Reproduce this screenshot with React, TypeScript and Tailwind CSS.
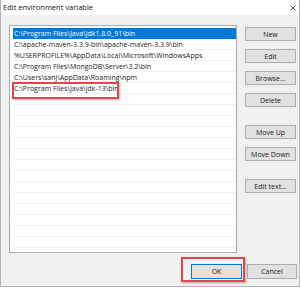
import React from "react";

const rows = [
  "C:\\Program Files\\Java\\jdk1.8.0_91\\bin",
  "C:\\apache-maven-3.3.9-bin\\apache-maven-3.3.9\\bin",
  "%USERPROFILE%\\AppData\\Local\\Microsoft\\WindowsApps",
  "C:\\Program Files\\MongoDB\\Server\\3.2\\bin",
  "C:\\Users\\sanj\\AppData\\Roaming\\npm",
  "C:\\Program Files\\Java\\jdk-13\\bin",
];

function Btn({ label, className = "" }: { label: string; className?: string }) {
  return (
    <div
      className={`h-[14px] w-[51px] bg-[#e1e1e1] border border-[#adadad] flex items-center justify-center text-[7px] leading-none text-[#222] ${className}`}
    >
      {label}
    </div>
  );
}

export default function App() {
  const all = [...rows, ...Array(16).fill("")];
  return (
    <div
      className="w-[300px] h-[287px] bg-[#f0f0f0] border-l border-r border-b border-[#b4b4b4] flex flex-col overflow-hidden"
      style={{ fontFamily: '"Open Sans", "Noto Sans", sans-serif' }}
    >
      <div className="h-[15px] bg-white flex items-center justify-between pl-[2px] pr-[2px]">
        <span className="text-[7.5px] leading-none text-[#111]">Edit environment variable</span>
        <svg width="6" height="6" viewBox="0 0 6 6" className="mr-[1px]">
          <path d="M0.5 0.5 L5.5 5.5 M5.5 0.5 L0.5 5.5" stroke="#444" strokeWidth="0.9" />
        </svg>
      </div>
      <div className="flex pt-[10px] pl-[8px]">
        <div className="w-[228px] h-[228px] bg-white border border-[#a9a9a9] pl-[3px] pt-[2px] overflow-hidden">
          {all.map((t, i) => (
            <div
              key={i}
              className={`relative h-[11px] border-b flex items-center pl-[1px] text-[7px] leading-none whitespace-nowrap ${
                i === 0 ? "bg-[#0078d7] text-white border-[#0078d7]" : "text-[#1a1a1a] border-[#f2f2f2]"
              }`}
            >
              {t}
              {i === 5 && (
                <div className="absolute left-[-1px] top-[-1px] w-[107px] h-[17px] border-2 border-[#e0464a] shadow-[1px_1px_2px_rgba(0,0,0,0.3)]" />
              )}
            </div>
          ))}
        </div>
        <div className="ml-[8px] mt-[2px] flex flex-col">
          <Btn label="New" />
          <Btn label="Edit" className="mt-[8px]" />
          <Btn label="Browse..." className="mt-[8px]" />
          <Btn label="Delete" className="mt-[8px]" />
          <Btn label="Move Up" className="mt-[18px]" />
          <Btn label="Move Down" className="mt-[8px]" />
          <Btn label="Edit text..." className="mt-[18px]" />
        </div>
      </div>
      <div className="flex justify-end pr-[2px] mt-[11px] gap-[5px]">
        <div className="relative">
          <div className="h-[15px] w-[51px] bg-[#e1e1e1] border border-[#0078d7] flex items-center justify-center text-[7px] leading-none text-[#222]">
            OK
          </div>
          <div className="absolute left-[-10px] right-[-3px] top-[-7px] bottom-[-3px] border-2 border-[#e0464a] shadow-[1px_1px_2px_rgba(0,0,0,0.3)]" />
        </div>
        <div className="h-[15px] w-[50px] bg-[#e1e1e1] border border-[#adadad] flex items-center justify-center text-[7px] leading-none text-[#222]">
          Cancel
        </div>
      </div>
    </div>
  );
}
